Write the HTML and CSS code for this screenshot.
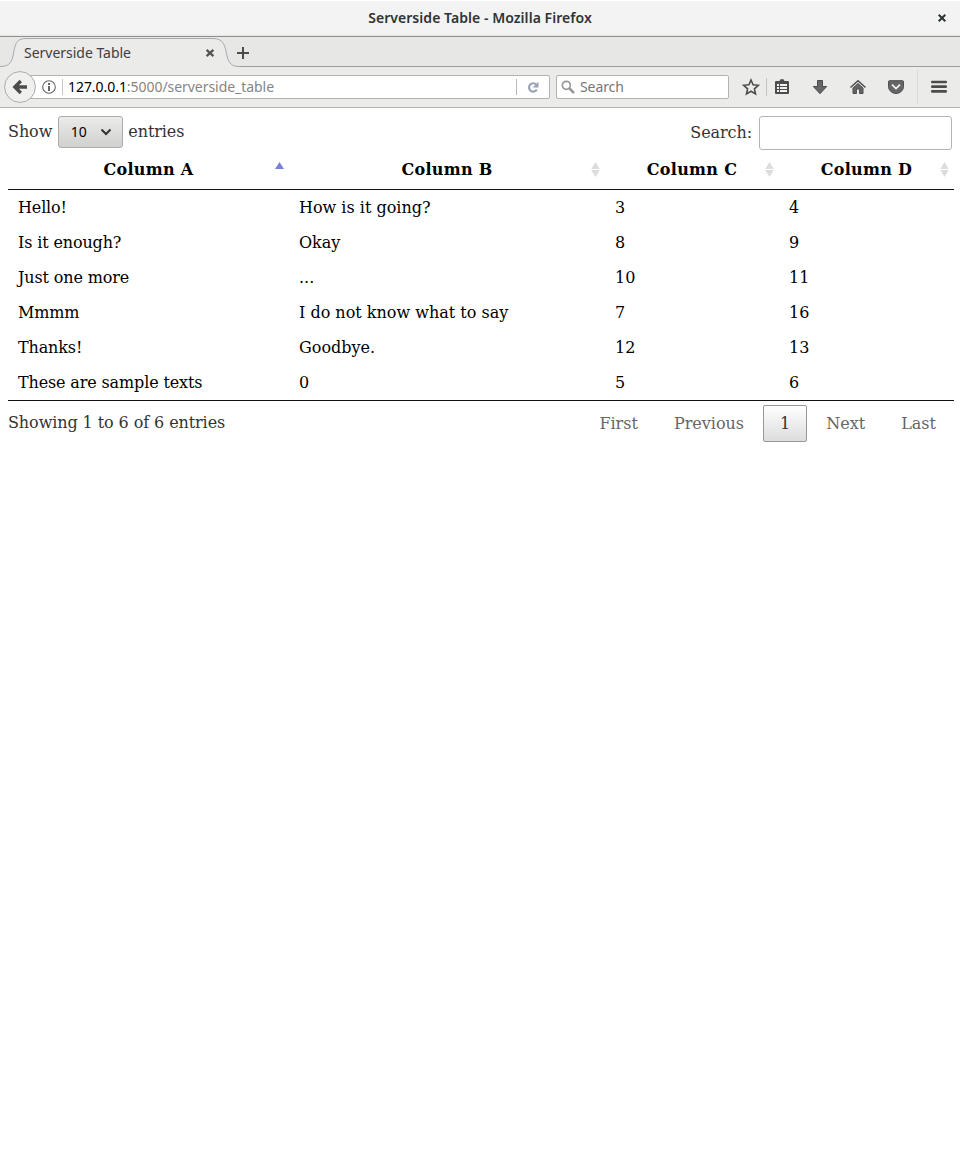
FILE: index.html
```html
<!DOCTYPE html>
<html lang="en">
<head>
<meta charset="utf-8">
<title>Serverside Table</title>
<link rel="stylesheet" href="styles.css">
</head>
<body>
<header class="titlebar">
  <span class="window-title">Serverside Table - Mozilla Firefox</span>
  <svg class="window-close" width="10" height="10" viewBox="0 0 10 10"><path d="M1.7 1.7l6.6 6.6M8.3 1.7L1.7 8.3" stroke="#2e3436" stroke-width="2"/></svg>
</header>
<div class="tabs">
  <svg class="tab-shape" width="240" height="30" viewBox="0 0 240 30"><path d="M0 29.5C8 29.5 11 27 13 19C15 9 15 1.5 26 1.5H213C224 1.5 225 9 227 19C229 27 232 29.5 240 29.5V30H0Z" fill="#ebebe9"/><path d="M0 29.5C8 29.5 11 27 13 19C15 9 15 1.5 26 1.5H213C224 1.5 225 9 227 19C229 27 232 29.5 240 29.5" fill="none" stroke="#a5abb0"/></svg>
  <span class="tab-title">Serverside Table</span>
  <svg class="tab-close" width="10" height="10" viewBox="0 0 10 10"><path d="M1.6 1.8l6.8 6.4M8.4 1.8L1.6 8.2" stroke="#555753" stroke-width="2.3"/></svg>
  <svg class="tab-new" width="14" height="14" viewBox="0 0 14 14"><path d="M7 1v12M1 7h12" stroke="#4c4c4c" stroke-width="2"/></svg>
</div>
<nav class="toolbar">
  <svg class="back" width="32" height="32" viewBox="0 0 32 32"><circle cx="16" cy="16" r="15.4" fill="#f0f0ef" stroke="#acacaa"/><path d="M16.8 10L10.8 16l6 6M11 16H23" fill="none" stroke="#4c4c4c" stroke-width="3.3"/></svg>
  <div class="url-box">
    <svg class="info" width="14" height="14" viewBox="0 0 14 14"><circle cx="7" cy="7" r="6.3" fill="none" stroke="#666" stroke-width="1.1"/><path d="M7 3v2M7 6v5" stroke="#555" stroke-width="1.8"/></svg>
    <i class="url-rule"></i>
    <span class="url"><b>127.0.0.1</b>:5000/serverside_table</span>
    <i class="reload-rule"></i>
    <svg class="reload" width="12" height="13" viewBox="0 0 12 13"><path d="M9.2 3.5A4.2 4.2 0 1 0 9.8 8.6" fill="none" stroke="#96a3b3" stroke-width="2.1"/><path d="M11.5.7v5.8H5.7Z" fill="#96a3b3"/></svg>
  </div>
  <div class="search-box">
    <svg width="14" height="14" viewBox="0 0 14 14"><circle cx="5.3" cy="5.3" r="4" fill="none" stroke="#999" stroke-width="1.7"/><path d="M8 8l5 5" stroke="#999" stroke-width="2.5"/></svg>
    <span class="search-hint">Search</span>
  </div>
  <svg class="actions" width="230" height="40" viewBox="730 67 230 40">
    <path d="M751 80l2.1 4.8 5.2.5-3.9 3.5 1.1 5.1-4.5-2.7-4.5 2.7 1.1-5.1-3.9-3.5 5.2-.5Z" fill="none" stroke="#4c4c4c" stroke-width="1.6"/>
    <path d="M766.5 78v18" stroke="#c4c4c2"/>
    <path d="M776 81h3.5l1-1.7h3l1 1.7h3.5q1 0 1 1v11q0 1-1 1h-12q-1 0-1-1V82q0-1 1-1Z" fill="#4c4c4c"/>
    <path d="M777 84h10v8h-10Z" fill="#f1f1f0"/><path d="M777 86.5h10M777 89.5h10M779.5 84v8" stroke="#4c4c4c"/>
    <path d="M817.5 80.5h5v6h4.2l-6.7 7.2-6.7-7.2h4.2Z" fill="#666" stroke="#4c4c4c"/>
    <path d="M850.5 87.5l7.5-6.8 7.5 6.8" fill="none" stroke="#4c4c4c" stroke-width="1.5"/>
    <path d="M853 88l5-4.5 5 4.5v5.5h-3.4v-4.5h-3.2v4.5H853Z" fill="#666" stroke="#4c4c4c"/>
    <path d="M889.5 80.7h13q1 0 1 1v4.8a7.5 7 0 0 1-15 0v-4.8q0-1 1-1Z" fill="#666" stroke="#4c4c4c"/>
    <path d="M892 84.6l4 4 4-4" fill="none" stroke="#f1f1f0" stroke-width="1.8"/>
    <path d="M917.5 70v34" stroke="#dcdcda"/>
    <path d="M932.3 82h13.4M932.3 86.7h13.4M932.3 91.4h13.4" stroke="#4c4c4c" stroke-width="2.7" stroke-linecap="round"/>
  </svg>
</nav>
<main class="page">
  <div class="controls">
    <div class="length"><span class="caption">Show</span><span class="select">10<svg width="12" height="8" viewBox="0 0 12 8"><path d="M1.5 1.5L6 6l4.5-4.5" fill="none" stroke="#2e3436" stroke-width="2"/></svg></span><span class="caption">entries</span></div>
    <label class="filter"><span class="caption">Search:</span><input class="filter-input" type="text"></label>
  </div>
  <table class="data">
    <colgroup><col class="col-a"><col class="col-b"><col class="col-c"><col class="col-d"></colgroup>
    <thead><tr>
      <th>Column A<svg class="sort" width="9" height="15" viewBox="0 0 9 15"><path d="M0 7L4.5 0 9 7Z" fill="#7b80dc"/></svg></th>
      <th>Column B<svg class="sort" width="9" height="15" viewBox="0 0 9 15"><path d="M.3 7L4.5 0 8.7 7ZM.3 8h8.4L4.5 15Z" fill="#dcdcdc"/></svg></th>
      <th>Column C<svg class="sort" width="9" height="15" viewBox="0 0 9 15"><path d="M.3 7L4.5 0 8.7 7ZM.3 8h8.4L4.5 15Z" fill="#dcdcdc"/></svg></th>
      <th>Column D<svg class="sort" width="9" height="15" viewBox="0 0 9 15"><path d="M.3 7L4.5 0 8.7 7ZM.3 8h8.4L4.5 15Z" fill="#dcdcdc"/></svg></th>
    </tr></thead>
    <tbody>
      <tr><td>Hello!</td><td>How is it going?</td><td>3</td><td>4</td></tr>
      <tr><td>Is it enough?</td><td>Okay</td><td>8</td><td>9</td></tr>
      <tr><td>Just one more</td><td>...</td><td>10</td><td>11</td></tr>
      <tr><td>Mmmm</td><td>I do not know what to say</td><td>7</td><td>16</td></tr>
      <tr><td>Thanks!</td><td>Goodbye.</td><td>12</td><td>13</td></tr>
      <tr><td>These are sample texts</td><td>0</td><td>5</td><td>6</td></tr>
    </tbody>
  </table>
  <div class="footer">
    <div class="summary">Showing 1 to 6 of 6 entries</div>
    <div class="pager"><span class="pg">First</span><span class="pg">Previous</span><span class="pg current">1</span><span class="pg">Next</span><span class="pg">Last</span></div>
  </div>
</main>
</body>
</html>
```
FILE: styles.css
```css
* { box-sizing: border-box; }
body { margin: 0; background: #fff; font: 16px/19px "DejaVu Serif", serif; color: #000; }
svg { display: block; flex: none; }

.titlebar, .tabs, .toolbar { font-family: "Noto Sans", "Open Sans", sans-serif; }
.titlebar { position: relative; height: 37px; display: flex; align-items: center; justify-content: center; background: linear-gradient(#fff 1px, #f3f3f3 1px, #f3f3f3 34px, #e6e6e4); border-bottom: 1px solid #8f908b; }
.window-title { font-size: 14px; font-weight: 600; line-height: 20px; color: #2e3436; letter-spacing: 0.05px; }
.window-close { position: absolute; right: 13px; top: 13px; }

.tabs { position: relative; height: 30px; display: flex; align-items: center; padding: 2px 0 0 24px; background: #e7e7e5; border-bottom: 1px solid #9d9e9a; }
.tab-shape { position: absolute; left: 0; top: 0; }
.tab-title { position: relative; width: 181px; font-size: 14px; line-height: 20px; color: #3c4042; letter-spacing: -0.02px; }
.tab-close { position: relative; margin-right: 21px; }

.toolbar { height: 41px; display: flex; align-items: center; padding-left: 4px; background: #ebebe9; border-bottom: 1px solid #b3b3b0; }
.back { position: relative; z-index: 1; }
.url-box { height: 24px; width: 530px; margin-left: -16px; padding-left: 21px; display: flex; align-items: center; background: #fff; border: 1px solid #b3b3b0; border-radius: 2px; font-size: 14px; color: #858585; }
.url-rule { width: 1px; height: 16px; margin: 0 5px 0 6px; background: #c4c4c4; }
.url { width: 448px; padding-bottom: 2px; letter-spacing: -0.05px; white-space: nowrap; }
.url b { font-weight: 400; color: #000; }
.reload-rule { width: 1px; height: 16px; background: #b4bbc0; }
.reload { margin-left: 10px; }
.search-box { width: 173px; height: 24px; margin-left: 6px; padding-left: 4px; display: flex; align-items: center; gap: 5px; background: #fff; border: 1px solid #b3b3b0; border-radius: 2px; font-size: 14px; color: #777; }
.search-hint { padding-bottom: 2px; letter-spacing: -0.1px; }
.actions { margin-left: 1px; }

.page { padding: 8px 6px 0 8px; }
.controls { height: 34px; display: flex; justify-content: space-between; align-items: flex-start; color: #333; padding-right: 2px; }
.caption { padding-bottom: 2px; letter-spacing: -0.08px; }
.length { display: flex; align-items: center; gap: 5.5px; height: 32px; }
.select { width: 65px; height: 32px; padding: 0 10px 0 12px; display: flex; align-items: center; justify-content: space-between; background: linear-gradient(#ebebea, #d0d0ce); border: 1px solid #acaca9; border-radius: 3px; font: 14px/20px "Noto Sans", sans-serif; color: #000; }
.filter { display: flex; align-items: center; gap: 7px; }
.filter-input { width: 193px; height: 34px; border: 1px solid #b3b3b0; border-radius: 3px; background: #fff; }

.data { width: 946px; table-layout: fixed; border-collapse: separate; border-spacing: 0; border-bottom: 1px solid #111; }
.col-a { width: 281px; }
.col-b { width: 316px; }
.col-c { width: 174px; }
.col-d { width: 175px; }
.data th { position: relative; height: 40px; padding: 10px 18px; font-weight: 700; letter-spacing: 0.3px; border-bottom: 1px solid #111; }
.sort { position: absolute; right: 5px; top: 12px; }
.data td { height: 35px; padding: 8px 10px; }
.data td:first-child { letter-spacing: -0.14px; }

.footer { display: flex; justify-content: space-between; padding: 4px 1px 0 0; color: #333; }
.summary { padding-top: 8px; letter-spacing: -0.09px; }
.pager { display: flex; gap: 2px; }
.pg { height: 37px; padding: 8px 16px; border: 1px solid transparent; border-radius: 2px; color: #666; }
.current { color: #333; border-color: #979797; background: linear-gradient(#fff, #dcdcdc); }
```
